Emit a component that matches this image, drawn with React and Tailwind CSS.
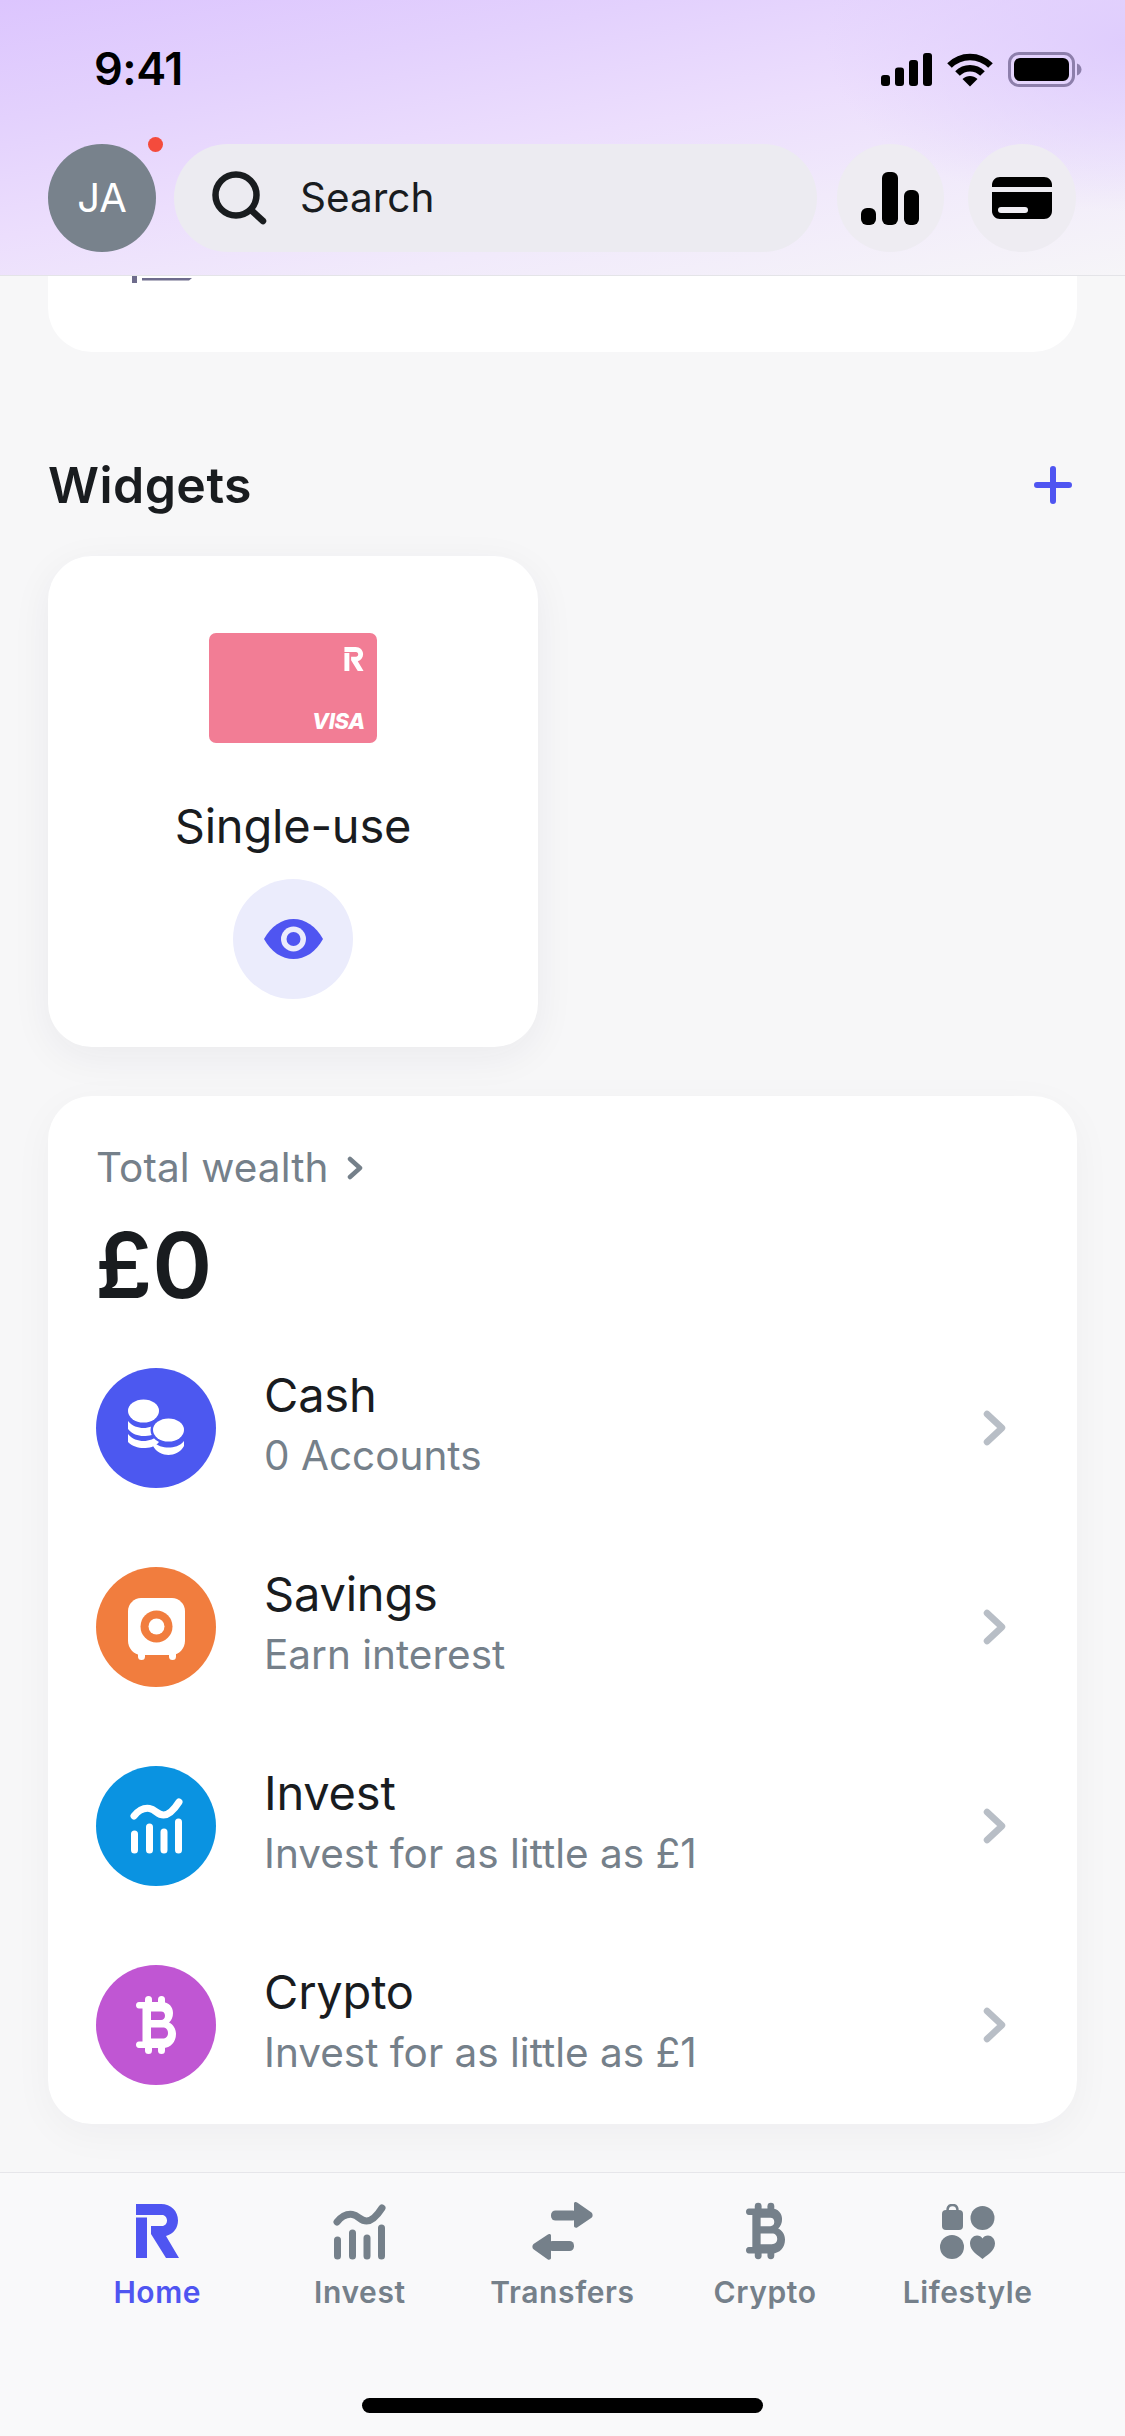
import React from "react";

const RPath = () => (
  <>
    <path d="M0 0H25C35 0 42 7 42 16.5C42 24 37.5 30 30 32L43 54H30L15 30V22H26C29 22 31 19.5 31 16.5C31 13.5 29 11 26 11H0Z" />
    <rect x="0" y="13.5" width="11" height="40.5" />
  </>
);

const Growth = ({ className }) => (
  <svg viewBox="0 0 52 57" className={className} fill="none" stroke="currentColor" strokeWidth="7" strokeLinecap="round">
    <path d="M3.5 19C8 13.5 13 10.5 19 11.5C25 12.5 27 18 33 18C39 18 44 12 48.5 5" />
    <path d="M4 37V53M19 30V53M33.5 35V53M48 25V53" />
  </svg>
);

const Bitcoin = ({ className }) => (
  <svg viewBox="0 0 40 58" className={className} fill="currentColor">
    <rect x="9" y="0" width="7" height="12" rx="3.5" />
    <rect x="22" y="0" width="7" height="12" rx="3.5" />
    <rect x="9" y="46" width="7" height="12" rx="3.5" />
    <rect x="22" y="46" width="7" height="12" rx="3.5" />
    <path
      fillRule="evenodd"
      d="M3 6H26C33 6 37 11 37 17C37 21 35.500 24.500 33 26.500C37 28.500 40 32.500 40 38C40 46 34.500 52 27 52H3C-1 52 -1 45.500 3 45.500H6.500V12.500H3C-1 12.500 -1 6 3 6ZM15 15.500V24H25C27.500 24 29 22.500 29 19.800C29 17 27.500 15.500 25 15.500ZM15 31.500V42.500H26.500C30 42.500 32 40.500 32 37C32 33.500 30 31.500 26.500 31.500Z"
    />
  </svg>
);

const Coins = ({ className }) => (
  <svg viewBox="0 0 57 57" className={className} fill="currentColor">
    <ellipse cx="15.500" cy="12" rx="15.500" ry="11.500" />
    <path d="M0 22C4 27 10 29 15.500 29C21 29 27 27 31 22V31C27 36 21 37 15.500 37C10 37 4 35 0 30Z" />
    <path d="M0 35C4 40 10 42 15.500 42C21 42 27 40 31 35V43C27 48 21 49 15.500 49C10 49 4 47 0 43Z" />
    <ellipse cx="40.500" cy="31" rx="18" ry="14" fill="#4c58f0" />
    <ellipse cx="40.500" cy="31" rx="15.500" ry="11.500" />
    <path d="M25 42C29 47 35 48.500 40.500 48.500C46 48.500 52 47 56 42V47C53 53 46 56 40.500 56C35 56 28 53 25 47Z" />
  </svg>
);

const Safe = ({ className }) => (
  <svg viewBox="0 0 57 62" className={className}>
    <path fill="currentColor" d="M13 0H44C51 0 57 6 57 13V43C57 50 51 57 44 57H13C6 57 0 50 0 43V13C0 6 6 0 13 0Z" />
    <rect x="10" y="50" width="7" height="12" rx="3.500" fill="currentColor" />
    <rect x="41" y="50" width="7" height="12" rx="3.500" fill="currentColor" />
    <circle cx="28.500" cy="28.500" r="16" fill="#f17d3e" />
    <circle cx="28.500" cy="28.500" r="8" fill="currentColor" />
  </svg>
);

const Transfers = ({ className }) => (
  <svg viewBox="0 0 61 58" className={className} fill="currentColor">
    <rect x="19" y="8.500" width="26" height="10" rx="4.500" />
    <path d="M42 1.500C42 0 44 -0.500 45.500 0.800L59.500 10.500C61 11.800 61 14.500 59.500 15.800L45.500 25.200C44 26.300 42 25.500 42 24Z" />
    <rect x="16" y="39" width="26" height="10" rx="4.500" />
    <path d="M19 33.500C19 32 17 31.500 15.500 32.800L1.500 42C0 43.300 0 46 1.500 47.300L15.500 57.200C17 58.300 19 57.500 19 56Z" />
  </svg>
);

const Lifestyle = ({ className }) => (
  <svg viewBox="0 0 55 55" className={className} fill="currentColor">
    <rect x="2" y="6" width="21" height="20" rx="4" />
    <path d="M7.500 8V6.500C7.500 3 9.500 1 12.500 1C15.500 1 17.500 3 17.500 6.500V8" fill="none" stroke="currentColor" strokeWidth="2.500" />
    <circle cx="42.500" cy="14" r="12" />
    <circle cx="12" cy="43" r="12" />
    <path d="M42.500 55C39 52 30 47 30 39.500C30 34.500 33.500 31.500 37 31.500C39.500 31.500 41.500 32.500 42.500 34.500C43.500 32.500 45.500 31.500 48 31.500C51.500 31.500 55 34.500 55 39.500C55 47 46 52 42.500 55Z" />
  </svg>
);

const Chevron = () => (
  <svg viewBox="0 0 25 36" className="h-[36px] w-[25px]" fill="none" stroke="#b8bec6" strokeWidth="6.500" strokeLinecap="round" strokeLinejoin="round">
    <path d="M5 4L20 18L5 32" />
  </svg>
);

const StatusIcons = () => (
  <div className="flex items-center gap-[15px]">
    <svg viewBox="0 0 51 33" className="h-[33px] w-[51px]" fill="#000">
      <rect x="0" y="22" width="9" height="11" rx="3" />
      <rect x="14" y="14.500" width="9" height="18.500" rx="3" />
      <rect x="28" y="7" width="9" height="26" rx="3" />
      <rect x="42" y="0" width="9" height="33" rx="3" />
    </svg>
    <svg viewBox="0 0 46 34" className="h-[34px] w-[46px]" fill="none" stroke="#000" strokeWidth="6.500">
      <path d="M2.500 12.500C14 1 32 1 43.500 12.500" />
      <path d="M10.500 20.500C17.500 13.500 28.500 13.500 35.500 20.500" />
      <path d="M23 33.500L15.500 26C20 22 26 22 30.500 26Z" fill="#000" stroke="none" />
    </svg>
    <svg viewBox="0 0 74 35" className="h-[35px] w-[74px]">
      <rect x="1.500" y="1.500" width="64" height="32" rx="9.500" fill="none" stroke="#8d7fab" strokeWidth="3" />
      <rect x="6" y="6" width="55" height="23" rx="6" fill="#000" />
      <path d="M69 11.500C72 12.500 73.500 15 73.500 17.500C73.500 20 72 22.500 69 23.500Z" fill="#8d7fab" />
    </svg>
  </div>
);

const rows = [
  { title: "Cash", sub: "0 Accounts", bg: "bg-[#4c58f0]", icon: <Coins className="h-[57px] w-[57px]" /> },
  { title: "Savings", sub: "Earn interest", bg: "bg-[#f17d3e]", icon: <Safe className="h-[62px] w-[57px] translate-y-[2px]" /> },
  { title: "Invest", sub: "Invest for as little as £1", bg: "bg-[#0a93e1]", icon: <Growth className="h-[57px] w-[53px]" /> },
  { title: "Crypto", sub: "Invest for as little as £1", bg: "bg-[#c056d3]", icon: <Bitcoin className="h-[58px] w-[40px]" /> },
];

const tabs = [
  {
    label: "Home",
    active: true,
    icon: (
      <svg viewBox="0 0 43 54" className="h-[54px] w-[43px]" fill="currentColor">
        <RPath />
      </svg>
    ),
  },
  { label: "Invest", icon: <Growth className="h-[57px] w-[53px]" /> },
  { label: "Transfers", icon: <Transfers className="h-[58px] w-[61px]" /> },
  { label: "Crypto", icon: <Bitcoin className="h-[58px] w-[39px]" /> },
  { label: "Lifestyle", icon: <Lifestyle className="h-[55px] w-[55px]" /> },
];

export default function App() {
  return (
    <div className="flex h-[2436px] w-[1125px] flex-col overflow-hidden bg-[#f7f7f8] font-['Inter',sans-serif] text-[#191c1f]">
      <header className="relative z-10 flex h-[276px] shrink-0 flex-col border-b border-[#e4e4e8] bg-[radial-gradient(ellipse_300px_170px_at_100%_15%,#dfcdfd_0%,#dfcdfd00_100%),linear-gradient(170deg,#dcc5fe_0%,#e3d1fd_25%,#ecdefd_50%,#f1eafb_72%,#f6f5f8_100%)]">
        <div className="flex h-[144px] items-start justify-between pl-[94px] pr-[43px] pt-[46px]">
          <span className="text-[45px] leading-[46px] font-semibold tracking-[-0.5px] text-black">9:41</span>
          <div className="pt-[6px]">
            <StatusIcons />
          </div>
        </div>
        <div className="flex items-center gap-[18px] pl-[48px] pr-[49px]">
          <div className="relative flex h-[108px] w-[108px] shrink-0 items-center justify-center rounded-full bg-[#78828c] text-[40px] font-normal text-white">
            JA
            <span className="absolute right-[-7px] top-[-7px] h-[15px] w-[15px] rounded-full bg-[#f44b3c]" />
          </div>
          <div className="flex h-[108px] w-[644px] items-center gap-[33px] rounded-full bg-[#ecebf1] pl-[38px]">
            <svg viewBox="0 0 55 54" className="h-[54px] w-[55px]" fill="none" stroke="#191c1f" strokeWidth="6.500" strokeLinecap="round">
              <circle cx="24" cy="24" r="20.500" />
              <path d="M39 39L51 50" />
            </svg>
            <span className="text-[40.5px] leading-none text-[#191c1f]">Search</span>
          </div>
          <div className="ml-[2px] flex h-[108px] w-[108px] items-center justify-center rounded-full bg-[#eeecf2]">
            <svg viewBox="0 0 58 53" className="h-[53px] w-[58px]" fill="#000">
              <rect x="0" y="36" width="15" height="17" rx="6" />
              <rect x="21" y="0" width="16" height="53" rx="6" />
              <rect x="43" y="18" width="15" height="35" rx="6" />
            </svg>
          </div>
          <div className="ml-[6px] flex h-[108px] w-[108px] items-center justify-center rounded-full bg-[#eeecf2]">
            <svg viewBox="0 0 60 42" className="h-[42px] w-[60px]">
              <path d="M8 0H52C56.500 0 60 3.500 60 8V10H0V8C0 3.500 3.500 0 8 0Z" fill="#000" />
              <path d="M0 15H60V34C60 38.500 56.500 42 52 42H8C3.500 42 0 38.500 0 34Z" fill="#000" />
              <rect x="6" y="30" width="30" height="6" rx="3" fill="#f0eef4" />
            </svg>
          </div>
        </div>
      </header>

      <main className="flex min-h-0 flex-1 flex-col px-[48px] pb-0">
        <div className="relative h-[76px] w-full shrink-0 rounded-b-[44px] bg-white">
          <svg viewBox="0 0 60 8" className="absolute left-[84px] top-0 h-[8px] w-[60px]" fill="#4a4870" opacity="0.8">
            <rect x="0" y="0" width="5" height="7" />
            <path d="M10 2H60L57 4.500H10Z" />
          </svg>
        </div>

        <div className="mt-[98px] flex h-[70px] shrink-0 items-center justify-between pr-[5px]">
          <h2 className="text-[50px] leading-none font-semibold tracking-[0.45px] text-[#191c1f]">Widgets</h2>
          <svg viewBox="0 0 38 38" className="h-[38px] w-[38px]" fill="none" stroke="#4f55f1" strokeWidth="6" strokeLinecap="round">
            <path d="M19 3V35M3 19H35" />
          </svg>
        </div>

        <section className="mt-[36px] flex h-[491px] w-[490px] shrink-0 flex-col items-center rounded-[44px] bg-white pt-[77px] shadow-[0_10px_40px_rgba(30,30,60,0.06)]">
          <div className="relative h-[110px] w-[168px] rounded-[7px] bg-[#f27d95]">
            <svg viewBox="0 0 43 54" className="absolute right-[13px] top-[14px] h-[24px] w-[20px]" fill="#fff">
              <RPath />
            </svg>
            <span className="absolute bottom-[11px] right-[12px] text-[22px] leading-none font-extrabold italic tracking-[-0.3px] text-white">VISA</span>
          </div>
          <p className="mt-[56px] text-[47px] leading-[54px] tracking-[-0.2px] text-[#191c1f]">Single-use</p>
          <div className="mt-[26px] flex h-[120px] w-[120px] items-center justify-center rounded-full bg-[#ebecfc]">
            <svg viewBox="0 0 59 40" className="h-[40px] w-[59px]">
              <path d="M0 20C7 7 18 0 29.500 0C41 0 52 7 59 20C52 33 41 40 29.500 40C18 40 7 33 0 20Z" fill="#4f55f1" />
              <circle cx="29.500" cy="20" r="12.500" fill="#ebecfc" />
              <circle cx="29.500" cy="20" r="7" fill="#4f55f1" />
            </svg>
          </div>
        </section>

        <section className="mt-[49px] h-[1028px] w-full shrink-0 rounded-[44px] bg-white pt-[47px] shadow-[0_10px_40px_rgba(30,30,60,0.04)]">
          <div className="flex h-[50px] items-center gap-[18px] pl-[48px]">
            <span className="text-[40.5px] leading-none tracking-[0.1px] text-[#75808a]">Total wealth</span>
            <svg viewBox="0 0 16 24" className="h-[24px] w-[16px]" fill="none" stroke="#75808a" strokeWidth="4.500" strokeLinecap="round" strokeLinejoin="round">
              <path d="M3 3L13 12L3 21" />
            </svg>
          </div>
          <div className="mt-[22px] flex h-[100px] items-center pl-[47px] text-[91px] leading-none font-semibold text-[#191c1f]">£0</div>
          <div className="mt-[13px]">
            {rows.map((r) => (
              <div key={r.title} className="flex h-[199px] items-center pl-[48px] pr-[70px]">
                <div className={`flex h-[120px] w-[120px] shrink-0 items-center justify-center rounded-full text-white ${r.bg}`}>{r.icon}</div>
                <div className="ml-[48px] flex-1 -translate-y-[2px]">
                  <p className="text-[47px] leading-[58px] tracking-[-0.2px] text-[#191c1f]">{r.title}</p>
                  <p className="mt-[3px] text-[40.5px] leading-[58px] text-[#75808a]">{r.sub}</p>
                </div>
                <Chevron />
              </div>
            ))}
          </div>
        </section>
      </main>

      <nav className="relative flex h-[264px] shrink-0 flex-col border-t border-[#e6e6ea] bg-[#f9f9fa]">
        <div className="grid h-[225px] grid-cols-5 px-[56px] pt-[28px]">
          {tabs.map((t) => (
            <div key={t.label} className={`flex flex-col items-center ${t.active ? "text-[#4f55f1]" : "text-[#75808a]"}`}>
              <div className="flex h-[60px] items-center justify-center">{t.icon}</div>
              <span className="mt-[13px] text-[30px] leading-[36px] font-semibold tracking-[0.6px]">{t.label}</span>
            </div>
          ))}
        </div>
        <div className="mx-auto h-[15px] w-[401px] rounded-full bg-black" />
      </nav>
    </div>
  );
}
